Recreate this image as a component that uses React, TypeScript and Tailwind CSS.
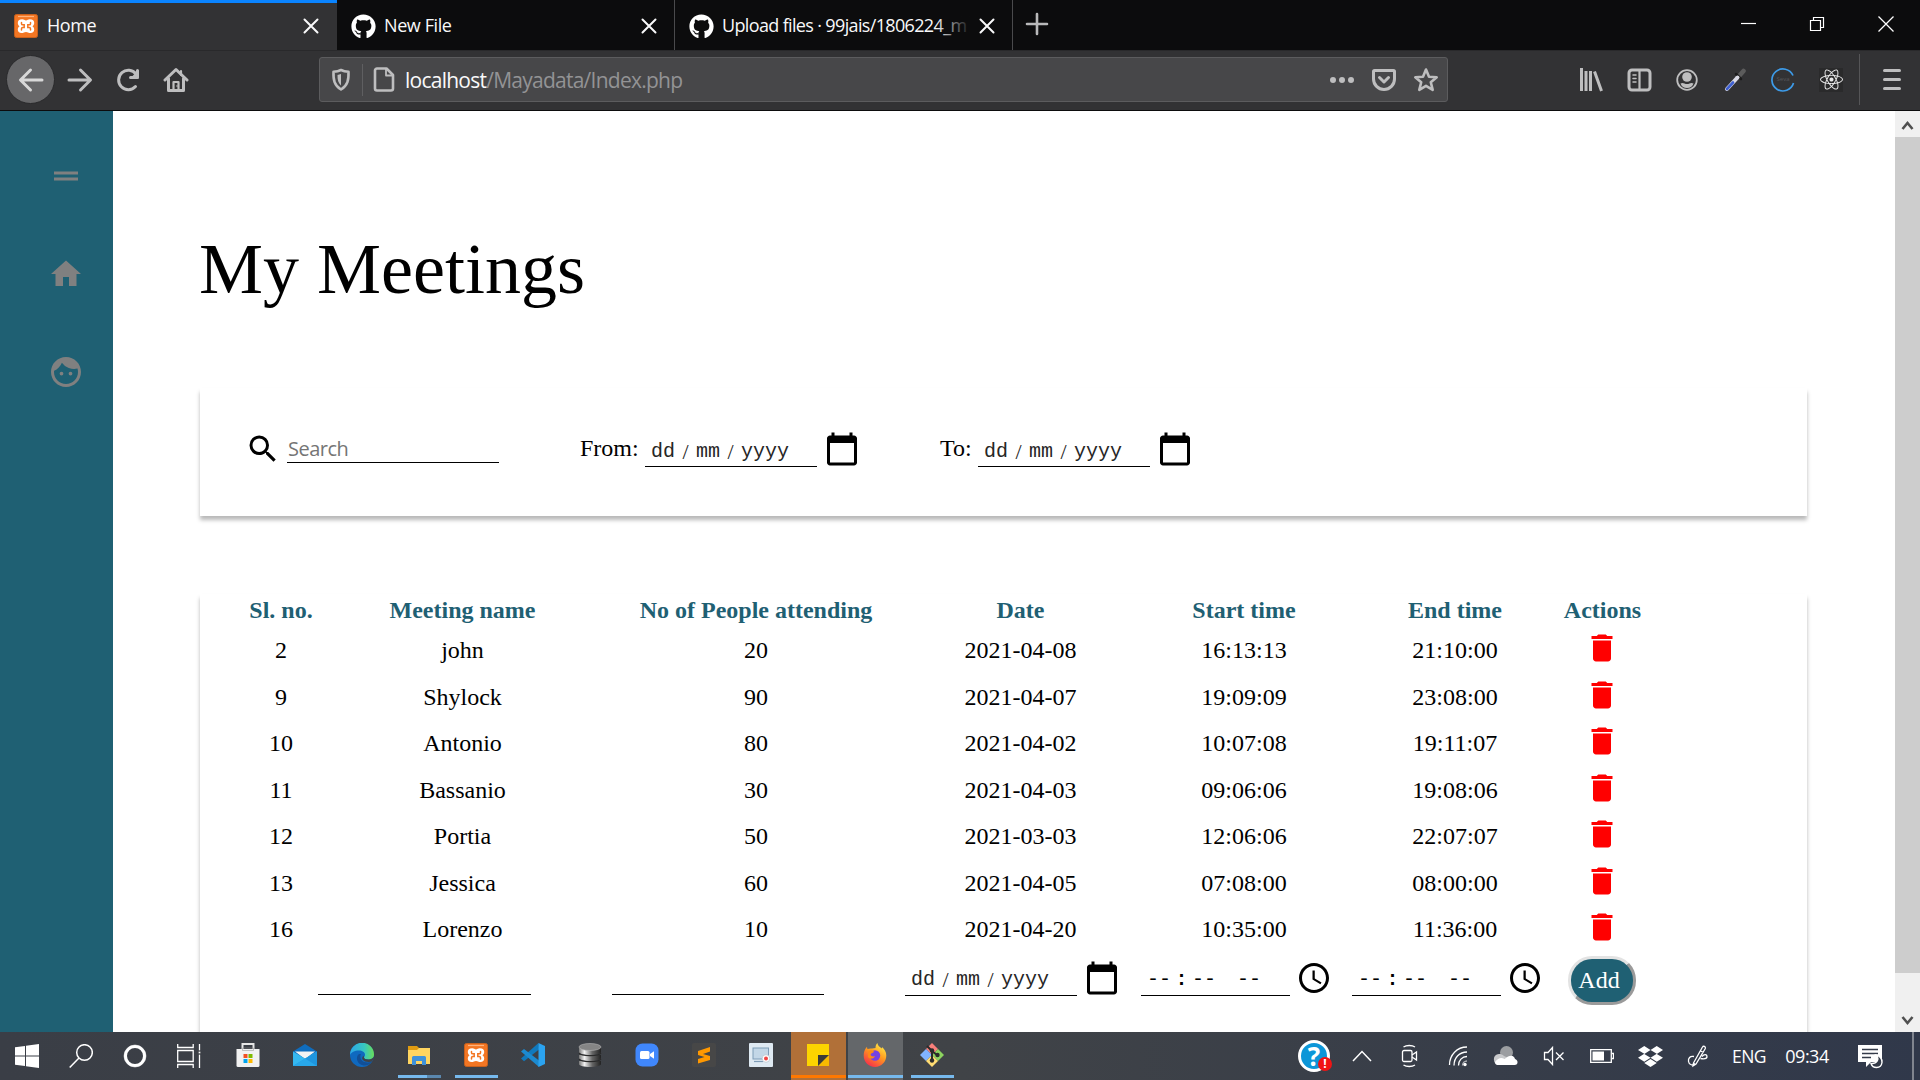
import React from "react";
import { FaGithub, FaReact, FaDropbox } from "react-icons/fa";
import {
  MdDragHandle,
  MdHome,
  MdFace,
  MdSearch,
  MdCalendarToday,
  MdDelete,
  MdAccessTime,
} from "react-icons/md";

type Kids = { children?: React.ReactNode };

const meetings = [
  ["2", "john", "20", "2021-04-08", "16:13:13", "21:10:00"],
  ["9", "Shylock", "90", "2021-04-07", "19:09:09", "23:08:00"],
  ["10", "Antonio", "80", "2021-04-02", "10:07:08", "19:11:07"],
  ["11", "Bassanio", "30", "2021-04-03", "09:06:06", "19:08:06"],
  ["12", "Portia", "50", "2021-03-03", "12:06:06", "22:07:07"],
  ["13", "Jessica", "60", "2021-04-05", "07:08:00", "08:00:00"],
  ["16", "Lorenzo", "10", "2021-04-20", "10:35:00", "11:36:00"],
];

const headings = ["Sl. no.", "Meeting name", "No of People attending", "Date", "Start time", "End time", "Actions"];

/* ---------- browser chrome ---------- */

function XamppIcon() {
  return (
    <svg width="24" height="24" viewBox="0 0 24 24" className="shrink-0">
      <rect x="0.5" y="0.5" width="23" height="23" rx="2" fill="#f37623" stroke="#c9601c" />
      <path d="M4 2.5h16" stroke="#ffb27c" strokeWidth="1.2" />
      <path
        d="M8.300 5.300C5 5.300 3.800 7 3.800 9c0 1.600.8 2.600 1.800 3.200-1 .7-1.800 1.700-1.800 3.300 0 2 1.300 3.600 3.700 3.600 2 0 3-1.200 4.500-1.200s2.500 1.200 4.500 1.200c2.400 0 3.700-1.600 3.700-3.600 0-1.600-.8-2.600-1.800-3.300 1-.6 1.800-1.600 1.800-3.200 0-2-1.200-3.700-4.500-3.700-1.600 0-2.400 1.100-3.700 1.100S9.900 5.300 8.300 5.300z"
        fill="#fff"
      />
      <path
        d="M7.500 8.500v1.200c0 .7.500 1.100 1.200 1.100h1.500v2.800H8.700c-.7 0-1.200.4-1.200 1.100v1.200M16.500 8.500v1.200c0 .7-.5 1.100-1.200 1.100h-1.500v2.800h1.500c.7 0 1.200.4 1.200 1.100v1.200"
        fill="none"
        stroke="#f37623"
        strokeWidth="1.500"
        strokeLinecap="round"
      />
    </svg>
  );
}

function CloseX() {
  return (
    <svg width="16" height="16" viewBox="0 0 16 16" className="shrink-0">
      <path d="M1.500 1.500l13 13M14.500 1.500l-13 13" stroke="#f9f9fa" strokeWidth="2" strokeLinecap="round" />
    </svg>
  );
}

function Tab({ icon, title, active, fade }: { icon: React.ReactNode; title: string; active?: boolean; fade?: boolean }) {
  return (
    <div
      className={
        active
          ? "flex h-[50px] w-[337px] items-center border-t-[3px] border-[#0a84ff] bg-[#323234] pl-[14px] pr-[18px] pb-px"
          : "flex h-[50px] w-[338px] items-center border-r border-[#4a4a4c] pl-[14px] pr-[17px] pt-[2px]"
      }
    >
      {icon}
      <div
        className={
          fade
            ? "relative ml-[9px] flex-1 whitespace-nowrap pb-[2px] text-[18px] leading-[24px] tracking-[-0.65px] text-[#f9f9fa]"
            : "ml-[9px] flex-1 whitespace-nowrap pb-[2px] text-[18px] leading-[24px] tracking-[-0.4px] text-[#f9f9fa]"
        }
      >
        {title}
        {fade && <div className="absolute inset-y-0 right-0 w-[36px] bg-linear-to-r from-transparent to-[#0c0c0d]" />}
      </div>
      <div className="ml-[8px]">
        <CloseX />
      </div>
    </div>
  );
}

function TabStrip() {
  return (
    <div className="flex h-[50px] items-stretch bg-[#0c0c0d]">
      <Tab active icon={<XamppIcon />} title="Home" />
      <Tab icon={<FaGithub size={25} color="#fff" className="-mr-px shrink-0" />} title="New File" />
      <Tab icon={<FaGithub size={25} color="#fff" className="-mr-px shrink-0" />} title="Upload files · 99jais/1806224_m" fade />
      <svg width="48" height="48" viewBox="0 0 48 48">
        <path d="M24 14v20M14 24h20" stroke="#b9b9ba" strokeWidth="2.600" strokeLinecap="round" />
      </svg>
      <div className="flex-1" />
      <svg width="206" height="48" viewBox="0 0 206 48" fill="none" stroke="#fff">
        <path d="M27 23.500h15" strokeWidth="1.200" />
        <path d="M96.500 20.500h10v10h-10zM99.500 20v-2.500h10v10h-2.500" strokeWidth="1.200" />
        <path d="M164.500 16.500l15 15M179.500 16.500l-15 15" strokeWidth="1.300" />
      </svg>
    </div>
  );
}

function Slot({ children }: Kids) {
  return <div className="flex w-12 items-center justify-center">{children}</div>;
}

function Toolbar() {
  const s = { fill: "none", stroke: "#bebebf", strokeWidth: 3, strokeLinecap: "round", strokeLinejoin: "round" } as const;
  return (
    <div className="flex h-[61px] items-center border-b border-t border-b-[#0c0c0d] border-t-[#29292b] bg-[#323234] pb-[2px]">
      <div className="ml-[6px] flex size-[49px] items-center justify-center rounded-full border border-[#29292b] bg-[#676769]">
        <svg width="26" height="26" viewBox="0 0 26 26" {...s} stroke="#d8d8d8">
          <path d="M24 13H3M12.500 3L2.500 13l10 10" />
        </svg>
      </div>
      <div className="ml-[12px] w-[26px]">
        <svg width="26" height="26" viewBox="0 0 26 26" {...s}>
          <path d="M2 13h21M13.500 3l10 10-10 10" />
        </svg>
      </div>
      <div className="ml-[22px] w-[26px]">
        <svg width="26" height="26" viewBox="0 0 26 26" {...s}>
          <path d="M20.500 19.500A9.700 9.700 0 1 1 21 7" />
          <path d="M23.500 3v8.500h-8.500" fill="#bebebf" stroke="none" />
          <path d="M22.500 3.500v7h-7" />
        </svg>
      </div>
      <div className="ml-[22px] w-[26px]">
        <svg width="26" height="26" viewBox="0 0 26 26" {...s}>
          <path d="M2 13L13 2.500 24 13M5.500 11.500V23.500h15V11.500" />
          <path d="M10.500 23v-8h5v8M18 4v4" strokeWidth="2.200" />
          <circle cx="14" cy="19" r="0.800" fill="#bebebf" stroke="none" />
        </svg>
      </div>
      <div className="ml-[130px] flex h-[45px] w-[1129px] items-center rounded-[3px] border border-[#5c5c5e] bg-[#474749]">
        <svg width="20" height="24" viewBox="0 0 20 24" className="ml-[11px]" fill="none" stroke="#bebebf" strokeWidth="2.600" strokeLinejoin="round">
          <path d="M10 2c2.500 1.300 5 1.700 7.500 1.800.3 8-.7 13.700-7.500 17.700C3.200 17.500 2.200 11.800 2.500 3.800 5 3.700 7.500 3.300 10 2z" />
          <path d="M10 6v11.500c-2.700-2.500-3.600-5.500-3.500-10.500z" fill="#bebebf" stroke="none" />
        </svg>
        <div className="ml-[11px] h-8 w-px bg-[#5f5f61]" />
        <svg width="22" height="25" viewBox="0 0 22 25" className="ml-[10px]" fill="none" stroke="#bebebf" strokeWidth="2.600" strokeLinejoin="round">
          <path d="M4 1.500h9.500l6.500 6.500v13.500a2 2 0 0 1-2 2H4a2 2 0 0 1-2-2V3.500a2 2 0 0 1 2-2z" />
          <path d="M13 2v6.500h6.500" strokeWidth="1.800" />
        </svg>
        <div className="ml-[10px] text-[21px] leading-[28px] tracking-[-0.75px] text-[#939395]">
          <span className="text-[#f9f9fa]">localhost</span>/Mayadata/Index.php
        </div>
        <div className="flex-1" />
        <div className="flex w-[42px] justify-center gap-[3px]">
          <i className="size-[6px] rounded-full bg-[#bebebf]" />
          <i className="size-[6px] rounded-full bg-[#bebebf]" />
          <i className="size-[6px] rounded-full bg-[#bebebf]" />
        </div>
        <div className="flex w-[42px] justify-center">
          <svg width="26" height="24" viewBox="0 0 26 24" {...s}>
            <path d="M3.500 2.500h19a1 1 0 0 1 1 1v7.500a10.500 10.500 0 0 1-21 0V3.500a1 1 0 0 1 1-1z" />
            <path d="M8.500 9.500l4.500 4.500 4.500-4.500" />
          </svg>
        </div>
        <div className="flex w-[42px] justify-center">
          <svg width="26" height="26" viewBox="0 0 26 26" {...s} strokeWidth="2.600">
            <path d="M13 2.500l3 7.200 7.700.6-5.900 5 1.900 7.600L13 18.800l-6.700 4.100 1.900-7.600-5.900-5 7.700-.6z" />
          </svg>
        </div>
      </div>
      <div className="flex-1" />
      <Slot>
        <svg width="24" height="24" viewBox="0 0 24 24" {...s} strokeWidth="3" strokeLinecap="butt">
          <path d="M2.500 0v23M7 3v20M11.500 3v20M15.500 3.500L22.500 23" />
        </svg>
      </Slot>
      <Slot>
        <svg width="25" height="24" viewBox="0 0 25 24" {...s}>
          <rect x="2" y="2" width="21" height="20" rx="3" />
          <path d="M12.500 2v20" strokeWidth="2.200" />
          <path d="M6 7h3M6 10.500h3M6 14h3" strokeWidth="1.500" />
        </svg>
      </Slot>
      <Slot>
        <svg width="24" height="24" viewBox="0 0 24 24" fill="#bebebf">
          <circle cx="12" cy="12" r="9.800" fill="none" stroke="#bebebf" strokeWidth="1.800" />
          <circle cx="12" cy="9" r="4.800" />
          <path d="M5.500 15.500c1.500-1 3-.6 4 0 1.500.8 3.500.8 5 0 1-.6 2.500-1 4 0-1 3-3.500 4.500-6.500 4.500s-5.500-1.500-6.500-4.500z" />
        </svg>
      </Slot>
      <Slot>
        <svg width="24" height="24" viewBox="0 0 24 24" strokeLinecap="round">
          <path d="M17 7l3.500-4" stroke="#5c5c5c" strokeWidth="4.500" />
          <path d="M13 6l5 5" stroke="#1c1c1c" strokeWidth="2.500" />
          <path d="M4 21l10.500-11.500" stroke="#d9d9e4" strokeWidth="4" />
          <path d="M4 21l6-6.500" stroke="#3e5fd0" strokeWidth="2.600" />
        </svg>
      </Slot>
      <Slot>
        <div className="relative flex size-6 items-center justify-center">
          <svg width="24" height="24" viewBox="0 0 24 24" fill="none" stroke="#3d9be9" strokeWidth="1.700">
            <path d="M22 7.500A11 11 0 1 0 22.500 15" />
          </svg>
          <span className="absolute text-[6px] text-[#56565a]">Seva</span>
        </div>
      </Slot>
      <Slot>
        <div className="flex size-6 items-center justify-center bg-[#2a2a2b]">
          <FaReact size={23} color="#e8e8e8" />
        </div>
      </Slot>
      <div className="ml-[4px] h-[51px] w-px bg-[#555557]" />
      <div className="ml-[23px] mr-[19px] flex w-[18px] flex-col gap-[6px]">
        <i className="h-[3px] rounded-full bg-[#bebebf]" />
        <i className="h-[3px] rounded-full bg-[#bebebf]" />
        <i className="h-[3px] rounded-full bg-[#bebebf]" />
      </div>
    </div>
  );
}

/* ---------- page ---------- */

function DateField() {
  return (
    <div className="flex items-center">
      <div className="flex h-9 w-[172px] items-center whitespace-pre border-b border-black pl-[6px] pt-[6px] font-['Liberation_Mono'] text-[20px] leading-[24px] text-[#262626]">
        <span>dd</span>
        <span className="w-[21px] text-center font-['Liberation_Serif'] text-[22px]">/</span>
        <span>mm</span>
        <span className="w-[21px] text-center font-['Liberation_Serif'] text-[22px]">/</span>
        <span>yyyy</span>
      </div>
      <MdCalendarToday size={36} className="ml-[7px]" />
    </div>
  );
}

function TimeField() {
  return (
    <div className="flex items-center">
      <div className="flex h-9 w-[149px] items-center whitespace-pre border-b border-black pl-[6px] pt-[6px] font-['Liberation_Mono'] text-[20px] leading-[24px]">
        <span>--</span>
        <span className="w-[21px] text-center font-bold">:</span>
        <span>--</span>
        <span className="ml-[21px]">--</span>
      </div>
      <MdAccessTime size={36} className="ml-[6px]" />
    </div>
  );
}

function Page() {
  return (
    <div className="flex h-[921px] overflow-hidden bg-white font-['Liberation_Serif',serif] text-[24px] text-black">
      <aside className="flex w-[113px] flex-col items-center gap-[62px] bg-[#1f6073] pl-[19px] pt-[47px] text-[#808080]">
        <MdDragHandle size={36} />
        <MdHome size={36} />
        <MdFace size={36} />
      </aside>
      <main className="flex flex-1 flex-col overflow-hidden pl-[87px] pr-[88px]">
        <h1 className="-ml-px mt-[118px] h-[80px] text-[72px] leading-[80px]">My Meetings</h1>
        <section className="mt-[79px] flex h-[128px] shrink-0 items-center pb-[6px] pl-[45px] shadow-[0_4px_4px_rgba(0,0,0,0.28)]">
          <MdSearch size={36} />
          <input
            placeholder="Search"
            className="ml-[6px] h-7 w-[212px] border-b border-black bg-transparent pl-px font-['Open_Sans',sans-serif] text-[20px] leading-[27px] tracking-[-0.5px] placeholder:text-[#757575]"
          />
          <span className="ml-[81px] w-[65px] pb-[2px] leading-none">From:</span>
          <DateField />
          <span className="ml-[80px] w-[38px] pb-[2px] leading-none">To:</span>
          <DateField />
        </section>
        <section className="mt-[78px] h-[600px] shrink-0 shadow-[0_4px_4px_rgba(0,0,0,0.28)]">
          <div className="grid h-[33px] grid-cols-[99px_264px_323px_206px_241px_181px_114px] items-start pl-[31.500px] text-center font-bold leading-8 text-[#1f6073]">
            {headings.map((h) => (
              <div key={h}>{h}</div>
            ))}
          </div>
          {meetings.map((row) => (
            <div key={row[0]} className="grid h-[46.500px] grid-cols-[99px_264px_323px_206px_241px_181px_114px] items-center pl-[31.500px] text-center">
              {row.map((cell, i) => (
                <div key={i} className="leading-[30px]">{cell}</div>
              ))}
              <div className="flex justify-center pb-[4px] pr-px">
                <MdDelete size={36} color="#ff0000" />
              </div>
            </div>
          ))}
          <div className="-mt-[2px] flex h-[54px] items-center pl-[118px]">
            <div className="mt-[2px] h-[32px] w-[213px] border-b border-black" />
            <div className="ml-[81px] mt-[2px] h-[32px] w-[212px] border-b border-black" />
            <div className="ml-[81px]">
              <DateField />
            </div>
            <div className="ml-[21px]">
              <TimeField />
            </div>
            <div className="ml-[20px]">
              <TimeField />
            </div>
            <button className="ml-[25px] mt-[5px] h-[49px] w-[68px] rounded-[24px] border-[3px] border-b-[#9a9a9a] border-l-[#e3e3e3] border-r-[#9a9a9a] border-t-[#e3e3e3] bg-[#1f6073] pr-[6px] leading-none text-white">
              Add
            </button>
          </div>
        </section>
      </main>
      <div className="flex w-[25px] flex-col items-center justify-between bg-[#f0f0f0]">
        <svg width="25" height="26" viewBox="0 0 25 26" fill="none" stroke="#505050" strokeWidth="2.600">
          <path d="M7.500 18l5-6 5 6" />
        </svg>
        <div className="h-[836px] w-full bg-[#cdcdcd]" />
        <div className="h-[33px]" />
        <svg width="25" height="26" viewBox="0 0 25 26" fill="none" stroke="#505050" strokeWidth="2.600">
          <path d="M7.500 11l5 6 5-6" />
        </svg>
      </div>
    </div>
  );
}

/* ---------- taskbar ---------- */

function App57({ children, line, tone }: Kids & { line?: "blue" | "split" | "wide" | "orange"; tone?: "orange" | "grey" }) {
  return (
    <div className="flex w-[57px] justify-center">
      <div
        className={
          "relative flex h-12 w-[55px] items-center justify-center " +
          (tone === "orange" ? "bg-[#b17038]" : tone === "grey" ? "bg-[#64676a]" : "")
        }
      >
        <div className="-mt-[2px] mr-px">{children}</div>
        {line === "blue" && <div className="absolute bottom-[2px] h-[3px] w-[43px] bg-[#76b9ed]" />}
        {line === "wide" && <div className="absolute bottom-[2px] h-[3px] w-[55px] bg-[#76b9ed]" />}
        {line === "orange" && <div className="absolute bottom-[2px] h-[3px] w-[55px] bg-[#ff7800]" />}
        {line === "split" && (
          <div className="absolute bottom-[2px] flex h-[3px] w-[43px]">
            <div className="w-[29px] bg-[#76b9ed]" />
            <div className="w-[14px] bg-[#5a87ae]" />
          </div>
        )}
      </div>
    </div>
  );
}

function Sys({ children }: Kids) {
  return <div className="flex w-[54px] items-center justify-center">{children}</div>;
}

function Taskbar() {
  const w = { fill: "none", stroke: "#fff", strokeWidth: 1.3 } as const;
  return (
    <div className="flex h-12 bg-linear-to-r from-[#3a3e46] via-[#404347] to-[#30384a]">
      <Sys>
        <svg width="24" height="24" viewBox="0 0 24 24" fill="#fff">
          <path d="M0 3.300L10 2v9.500H0zM11 1.800L24 0v11.500H11zM0 12.500h10V22L0 20.700zM11 12.500h13V24l-13-1.800z" />
        </svg>
      </Sys>
      <Sys>
        <svg width="24" height="24" viewBox="0 0 24 24" {...w} strokeWidth="1.500">
          <circle cx="15.500" cy="8.500" r="7.800" />
          <path d="M10 14L.7 23.500" />
        </svg>
      </Sys>
      <Sys>
        <svg width="24" height="24" viewBox="0 0 24 24" fill="none" stroke="#fff">
          <circle cx="12" cy="12" r="9.500" strokeWidth="3" />
          <circle cx="12" cy="12" r="11" strokeWidth="1" opacity="0.5" />
        </svg>
      </Sys>
      <Sys>
        <svg width="24" height="24" viewBox="0 0 24 24" {...w}>
          <path d="M.7 0v3.500h15.500V0M.7 6.500h15.500v11H.7zM.7 24v-3.500h15.500V24M22.500 0v24" />
          <rect x="21" y="7" width="3" height="3" fill="#fff" stroke="#3f4248" />
        </svg>
      </Sys>
      <div className="w-[4px]" />
      <App57>
        <svg width="24" height="24" viewBox="0 0 24 24">
          <path d="M6.500 8V1h11v7" fill="none" stroke="#e6e6e6" strokeWidth="2" />
          <path d="M.5 6h23v16.500a1.500 1.500 0 0 1-1.500 1.500H2a1.500 1.500 0 0 1-1.500-1.500z" fill="#f1f1f1" />
          <path d="M6.500 5h11v2.500h-11z" fill="none" stroke="#8e8e8e" strokeWidth="0.500" />
          <path d="M7.500 11h4v4h-4z" fill="#f25022" />
          <path d="M12.500 11h4v4h-4z" fill="#7fba00" />
          <path d="M7.500 16h4v4h-4z" fill="#00a4ef" />
          <path d="M12.500 16h4v4h-4z" fill="#ffb900" />
        </svg>
      </App57>
      <App57>
        <svg width="24" height="24" viewBox="0 0 24 24">
          <path d="M0 8.500L12 1l12 7.500V14H0z" fill="#0f6cbd" />
          <path d="M2 8.500h20L12 16z" fill="#f3f3f3" />
          <path d="M0 8.500l12 7 12-7V23H0z" fill="#35b8f1" />
          <path d="M0 23L24 8.500V23z" fill="#1e95de" />
          <path d="M0 23L12 15.500 24 23z" fill="#28a8ea" />
        </svg>
      </App57>
      <App57>
        <svg width="24" height="24" viewBox="0 0 24 24">
          <defs>
            <linearGradient id="edgeTop" x1="0" x2="1">
              <stop offset="0" stopColor="#2ba6e8" />
              <stop offset="0.600" stopColor="#38c6c0" />
              <stop offset="1" stopColor="#6ade57" />
            </linearGradient>
          </defs>
          <circle cx="12" cy="12" r="12" fill="#0f69bf" />
          <path d="M0 12A12 12 0 0 1 24 11.500c0 3-2 5-5.500 5-3 0-4.500-1-4.500-2 0-.8 1-1 1-2.800 0-2.500-2.700-4.200-6-4.200C4.500 7.500 1 9.500 0 12z" fill="url(#edgeTop)" />
          <path d="M9 11c-4 3-2 10.500 4.500 11.500 4 .3 6.500-1.500 8.500-4-3.500 1.500-8 1.500-10.500-1.500-1.500-2-1.500-4.500-.5-6z" fill="#124f96" />
          <path d="M14 14.500c0 1 1.500 2 4.500 2 2.500 0 4.200-1 5-2.500l.5 1-2 3.500c-3 1-8 .5-9.500-2-1-2 .5-3 1-4z" fill="#3f4347" />
        </svg>
      </App57>
      <App57 line="split">
        <svg width="24" height="24" viewBox="0 0 24 24">
          <path d="M1 3h9l2 2v4H1z" fill="#e09b11" />
          <path d="M1 7h9l2-2h11v16H1z" fill="#ffd560" />
          <path d="M5 22v-7.500a1.500 1.500 0 0 1 1.500-1.500h11a1.500 1.500 0 0 1 1.500 1.500V22h-4v-4H9v4z" fill="#3f91d9" />
        </svg>
      </App57>
      <App57 line="blue">
        <XamppIcon />
      </App57>
      <App57>
        <svg width="24" height="24" viewBox="0 0 24 24">
          <path d="M17.500 0L0 15.500l3 2.700L18 6.500z" fill="#1079bd" />
          <path d="M0 8.500l3-2.500L18 17.500V24z" fill="#1c8ad0" />
          <path d="M17.500 0L24 3v18l-6.500 3z" fill="#2ba3f0" />
        </svg>
      </App57>
      <App57>
        <svg width="24" height="24" viewBox="0 0 24 24">
          <defs>
            <linearGradient id="disk" x1="0" x2="1">
              <stop offset="0" stopColor="#777" />
              <stop offset="0.250" stopColor="#f2f2f2" />
              <stop offset="0.600" stopColor="#666" />
              <stop offset="1" stopColor="#222" />
            </linearGradient>
          </defs>
          <path d="M1 18v3c0 4 22 4 22 0v-3zM1 12v3c0 4 22 4 22 0v-3zM1 5v4c0 4 22 4 22 0V5z" fill="url(#disk)" />
          <path d="M1 10c2 3.500 20 3.500 22 0M1 16c2 3.500 20 3.500 22 0" fill="none" stroke="#2a2a2a" strokeWidth="1.200" />
          <ellipse cx="12" cy="4" rx="11" ry="3.500" fill="#858585" stroke="#b5b5b5" strokeWidth="0.600" />
        </svg>
      </App57>
      <App57>
        <svg width="24" height="24" viewBox="0 0 24 24">
          <rect x="0.500" y="0.500" width="23" height="23" rx="7" fill="#4087fc" />
          <rect x="5" y="8" width="9.500" height="8" rx="1.500" fill="#fff" />
          <path d="M15 11l4-2.700v7.400L15 13z" fill="#fff" />
        </svg>
      </App57>
      <App57>
        <svg width="24" height="24" viewBox="0 0 24 24">
          <rect width="24" height="24" rx="2" fill="#474747" />
          <path d="M18 4v4.500L11 11l7 2v4L6 20.500V16l6.500-2L6 12V8z" fill="#ff9800" />
        </svg>
      </App57>
      <App57>
        <svg width="24" height="24" viewBox="0 0 24 24">
          <rect width="24" height="24" rx="1" fill="#dfeaf3" />
          <rect x="4" y="5" width="15.500" height="11" fill="#c3d7e7" stroke="#7f9db8" />
          <path d="M5 18.500h9" stroke="#7f9db8" strokeWidth="1.200" />
          <circle cx="17" cy="15.500" r="3.800" fill="#fff" stroke="#b6c3ce" strokeWidth="0.700" />
          <circle cx="17" cy="15.500" r="2" fill="#f04545" />
        </svg>
      </App57>
      <App57 tone="orange" line="orange">
        <svg width="24" height="24" viewBox="0 0 24 24">
          <path d="M1 1h22v22H1z" fill="#fdd400" />
          <path d="M12 23h11V12z" fill="#f7b900" />
          <path d="M12 12h11L12 23z" fill="#3a3a38" />
        </svg>
      </App57>
      <App57 tone="grey" line="wide">
        <svg width="24" height="24" viewBox="0 0 24 24">
          <defs>
            <linearGradient id="fox" x1="0.800" y1="0" x2="0.200" y2="1">
              <stop offset="0" stopColor="#fff04a" />
              <stop offset="0.450" stopColor="#ff9a1f" />
              <stop offset="1" stopColor="#f5264f" />
            </linearGradient>
          </defs>
          <path d="M12.500 5C12.500 3 13 1 14.500 0c0 3 2.500 3.700 4 5.500.5-.5.500-1 .5-1.500C21.500 6 23.300 9 23.300 12.500 23.300 18.800 18.300 24 12 24S.7 19 .7 12.800C.7 9.500 1.500 6.500 4 3.800c0 1 .2 1.700.5 2.200C6 5.500 7 5.300 9 5.500z" fill="url(#fox)" />
          <circle cx="12" cy="12.500" r="5.200" fill="#7542e5" />
          <path d="M5.500 8c2-1 4-.8 5.500.5-.5 1.500-3 1.500-3.500 3 .5 2 2.500 2.500 4.500 1.500-1 3-5 3.500-7 1z" fill="#ff8a16" />
        </svg>
      </App57>
      <App57 line="blue">
        <svg width="24" height="24" viewBox="0 0 24 24">
          <path d="M12 0l6 6-6 6-6-6z" fill="#f77f7a" />
          <path d="M6 6l6 6-6 6-6-6z" fill="#80b3ff" />
          <path d="M18 6l6 6-6 6-6-6z" fill="#8cd35f" />
          <path d="M12 12l6 6-6 6-6-6z" fill="#ffdc73" />
          <path d="M7 3l5 5v10M12 8l5 4" fill="none" stroke="#2b2b2b" strokeWidth="2" />
          <g fill="#2b2b2b">
            <circle cx="12" cy="7.500" r="2.200" />
            <circle cx="12" cy="17.500" r="2.200" />
            <circle cx="17.500" cy="12" r="2.200" />
          </g>
        </svg>
      </App57>

      <div className="flex-1" />

      <Slot>
        <div className="relative flex size-8 items-center justify-center rounded-full border-[3px] border-white bg-[#0c96d8] text-[26px] font-bold leading-none text-white">
          ?
          <div className="absolute -bottom-[2px] -right-[5px] flex size-[14px] items-center justify-center rounded-full bg-[#f01414] text-[12px] leading-none">!</div>
        </div>
      </Slot>
      <Slot>
        <svg width="20" height="12" viewBox="0 0 20 12" {...w} strokeWidth="1.500">
          <path d="M1 11l9-9.500L19 11" />
        </svg>
      </Slot>
      <Slot>
        <svg width="18" height="24" viewBox="0 0 18 24" {...w}>
          <rect x="1.500" y="6.500" width="9.500" height="11" rx="1.500" />
          <path d="M11 11l4.500-3v8L11 13M2.500 3c3-2 8.500-2 11.500 0M2.500 21c3 2 8.500 2 11.500 0" />
        </svg>
      </Slot>
      <Slot>
        <svg width="20" height="22" viewBox="0 0 20 22" {...w}>
          <path d="M1.500 20C1.500 10 9 2 19 2M6 20.500C6 12.500 11.500 7 19 7M10.500 20.500c0-5 3.500-9 8.500-9" />
          <path d="M14.500 20.500c0-2.500 2-4.500 4.500-4.500" opacity="0.600" />
          <circle cx="17" cy="19.500" r="1.700" fill="#fff" stroke="none" />
        </svg>
      </Slot>
      <Slot>
        <svg width="26" height="22" viewBox="0 0 26 22">
          <circle cx="13.500" cy="7.500" r="6.500" fill="#9c9ea1" />
          <path d="M1 15a5 5 0 0 1 5-6c2 0 3.500.5 5 2l9 4-2 5H6a5 5 0 0 1-5-5z" fill="#c9cacc" />
          <path d="M3.500 20L15 11.500c4-2 6.500 0 7 2.500 3 .5 4 6-.5 6z" fill="#fff" />
          <path d="M2 17c4-5 8-5 12-1l6 4H5c-2 0-3-1-3-3z" fill="#fff" />
        </svg>
      </Slot>
      <Slot>
        <svg width="22" height="20" viewBox="0 0 22 20" {...w}>
          <path d="M1.500 6.500H5l4.500-5v17L5 13.500H1.500zM13 6.500l7.500 7.500M20.500 6.500L13 14" />
        </svg>
      </Slot>
      <Slot>
        <svg width="24" height="14" viewBox="0 0 24 14">
          <path d="M.7.700h20.600v12.600H.7zM22 4.500h1.500v5H22" {...w} />
          <path d="M2.500 2.500H14v9H2.500z" fill="#fff" />
        </svg>
      </Slot>
      <Slot>
        <FaDropbox size={25} color="#fff" />
      </Slot>
      <Slot>
        <svg width="22" height="24" viewBox="0 0 22 24" {...w}>
          <path d="M6.500 19L15.500 3c.8-1.500 3.500-.5 2.800 1.500L9 20l-3 2zM13.500 7l3 1.500M7 12.500c-4-1-6 2-5.500 5 .5 3.500 4.500 4.500 6.500 2M15 12.500c2-2.500 5-2.500 5 .5-.5 2-3.500 2-6.500 1.500" />
        </svg>
      </Slot>
      <div className="flex w-[54px] items-center justify-center pt-px text-[17.500px] tracking-[-0.600px] text-white">ENG</div>
      <div className="flex w-[62px] items-center justify-center pt-px text-[18px] tracking-[-0.500px] text-white">09:34</div>
      <div className="flex w-16 items-center justify-center">
        <svg width="26" height="26" viewBox="0 0 26 26">
          <path d="M1 2h24v17H14l-5 5v-5H1z" fill="#fff" />
          <path d="M5 6.500h16M5 10.500h16M5 14.500h9" stroke="#343b49" strokeWidth="1.500" />
          <path d="M19 12c4 4 1 9-5 8.500 1.500 5 10 6 11-1 .3-4-2.500-7-6-7.500z" fill="#343b49" stroke="#fff" strokeWidth="1.400" />
        </svg>
      </div>
      <div className="ml-[10px] mr-[6px] w-[2px] bg-[#80858f]" />
    </div>
  );
}

export default function App() {
  return (
    <div className="flex h-[1080px] w-[1920px] flex-col overflow-hidden font-['Open_Sans',sans-serif]">
      <TabStrip />
      <Toolbar />
      <Page />
      <Taskbar />
    </div>
  );
}
